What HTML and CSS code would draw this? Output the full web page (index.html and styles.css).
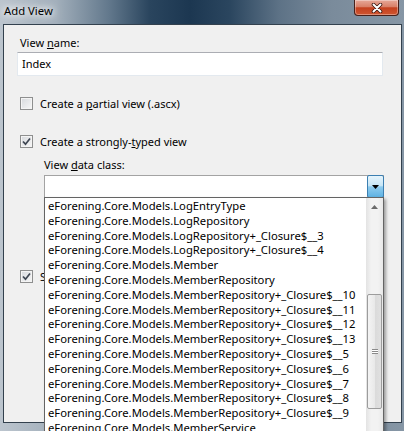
FILE: index.html
```html
<!DOCTYPE html>
<html>
    <head>
        <meta name="viewport" content="width=device-width, initial-scale=1" />
        <link rel="stylesheet" href="styles.css">
    </head>
    <body>
        <div class="window">
            <div class="titlebar">
                <span class="title">Add View</span>
                <div class="close">
                    <svg width="12" height="10" viewBox="0 0 12 10">
                        <path d="M2.5 1.5 L9.5 8.5 M9.5 1.5 L2.5 8.5" stroke="#3b1710" stroke-width="3.6" stroke-linecap="round" />
                        <path d="M2.5 1.5 L9.5 8.5 M9.5 1.5 L2.5 8.5" stroke="#fff" stroke-width="2" stroke-linecap="round" />
                    </svg>
                </div>
            </div>
            <div class="client">
                <div class="label first">View <u>n</u>ame:</div>
                <div class="textbox">Index</div>

                <div class="check row-partial">
                    <span class="box"></span>
                    <span>Create a <u>p</u>artial view (.ascx)</span>
                </div>
                <div class="check row-typed">
                    <span class="box"><svg width="11" height="11" viewBox="0 0 11 11"><path d="M2 5.5 L4.5 8.2 L9 2.5" fill="none" stroke="#3e4652" stroke-width="1.7" /></svg></span>
                    <span>Create a strongly-<u>t</u>yped view</span>
                </div>

                <div class="typed">
                    <div class="label">View <u>d</u>ata class:</div>
                    <div class="combo">
                        <div class="combo-text"></div>
                        <div class="combo-btn">
                            <svg width="7" height="4" viewBox="0 0 7 4"><path d="M0 0 H7 L3.5 4 Z" fill="#000" /></svg>
                        </div>
                        <div class="droplist">
                            <div class="items" id="items"></div>
                            <div class="scrollbar">
                                <div class="arrow">
                                    <svg width="7" height="4" viewBox="0 0 7 4"><path d="M0 4 H7 L3.5 0 Z" fill="#6b6b6b" /></svg>
                                </div>
                                <div class="thumb"><span class="grip"></span></div>
                            </div>
                        </div>
                    </div>
                </div>

                <div class="check row-master">
                    <span class="box"><svg width="11" height="11" viewBox="0 0 11 11"><path d="M2 5.5 L4.5 8.2 L9 2.5" fill="none" stroke="#3e4652" stroke-width="1.7" /></svg></span>
                    <span>Select master page</span>
                </div>
            </div>
        </div>
        <script>
            const names = [
                'LogEntryType',
                'LogRepository',
                'LogRepository+_Closure$__3',
                'LogRepository+_Closure$__4',
                'Member',
                'MemberRepository',
                'MemberRepository+_Closure$__10',
                'MemberRepository+_Closure$__11',
                'MemberRepository+_Closure$__12',
                'MemberRepository+_Closure$__13',
                'MemberRepository+_Closure$__5',
                'MemberRepository+_Closure$__6',
                'MemberRepository+_Closure$__7',
                'MemberRepository+_Closure$__8',
                'MemberRepository+_Closure$__9',
                'MemberService'
            ];
            document.getElementById('items').innerHTML = names
                .map((n) => `<div class="item">eForening.Core.Models.${n}</div>`)
                .join('');
        </script>
    </body>
</html>
```

FILE: styles.css
```css
body {
    margin: 0;
    font-family: "Noto Sans", sans-serif;
    font-size: 11px;
    color: #000;
}

.window {
    background: linear-gradient(90deg, #bcc5ce 0, #a2afbb 14%, #62788c 27%, #2a455e 37%, #1c3751 47%, #2b465f 57%, #5d7286 69%, #7a8b9b 82%, #8696a5 100%);
    display: flex;
    flex-direction: column;
    height: 431px;
    overflow: hidden;
    width: 404px;
}

/* Title bar */
.titlebar {
    align-items: flex-start;
    display: flex;
    flex: none;
    height: 24px;
    justify-content: space-between;
}
.title {
    font-size: 11.3px;
    line-height: 15px;
    padding: 3px 0 0 4px;
    text-shadow: 0 0 6px #fff, 0 0 10px #fff, 0 0 14px rgba(255, 255, 255, 0.8);
}
.close {
    align-items: center;
    background: linear-gradient(#e6a898 0, #d98068 45%, #c4411f 52%, #cf5530 100%);
    border: 1px solid #47201a;
    border-radius: 0 0 4px 4px;
    border-top: none;
    box-shadow: inset 0 0 0 1px rgba(255, 255, 255, 0.35);
    display: flex;
    height: 15px;
    justify-content: center;
    margin-right: 5px;
    width: 43px;
}

/* Client area */
.client {
    background-color: #f0f0f0;
    border: 1px solid #33414e;
    flex: none;
    height: 399px;
    margin: 0 2px 0 3px;
    padding: 10px 0 0 13px;
    box-sizing: border-box;
}
.label {
    line-height: 15px;
    margin: 8px 0 0 0;
}
.label.first {
    margin: 0 0 0 3px;
}
.textbox {
    background-color: #fff;
    border: 1px solid #e3e9ef;
    border-top-color: #abadb3;
    box-sizing: border-box;
    height: 24px;
    line-height: 22px;
    margin-top: 2px;
    padding-left: 4px;
    width: 366px;
}

/* Checkboxes */
.check {
    align-items: center;
    display: flex;
    gap: 7px;
    height: 15px;
    line-height: 15px;
    margin-left: 3px;
    white-space: nowrap;
}
.row-partial {
    margin-top: 20px;
}
.row-typed {
    margin-top: 23px;
}
.row-master {
    margin-top: 71px;
}
.box {
    align-items: center;
    background: linear-gradient(135deg, #d6d9dd, #f7f7f7);
    border: 1px solid #8e8f8f;
    box-shadow: inset 0 0 0 1px #f4f4f4;
    box-sizing: border-box;
    display: flex;
    flex: none;
    height: 13px;
    justify-content: center;
    width: 13px;
}

/* Combo box */
.typed {
    padding-left: 27px;
}
.combo {
    background-color: #fff;
    border: 1px solid #a3a3a3;
    box-sizing: border-box;
    display: flex;
    height: 23px;
    margin-top: 3px;
    position: relative;
    width: 340px;
}
.combo-text {
    flex: 1;
}
.combo-btn {
    align-items: center;
    background: linear-gradient(#e6f4fc 0, #c8e6f6 45%, #8ecbee 52%, #5fb2e3 100%);
    border: 1px solid #3c7fb1;
    border-radius: 2px;
    display: flex;
    justify-content: center;
    margin: -1px -1px -1px 0;
    width: 15px;
}

/* Dropped list */
.droplist {
    background-color: #fff;
    border: 1px solid #646464;
    box-shadow: 2px 2px 3px rgba(0, 0, 0, 0.35);
    display: flex;
    height: 260px;
    left: -1px;
    position: absolute;
    right: -1px;
    top: 21px;
}
.items {
    flex: 1;
    overflow: hidden;
    padding-top: 1px;
}
.item {
    font-size: 11.25px;
    line-height: 14.8px;
    padding-left: 3px;
    white-space: nowrap;
}
.scrollbar {
    background: linear-gradient(90deg, #e3e3e3, #f2f2f2 30%, #f2f2f2 70%, #e8e8e8);
    display: flex;
    flex: none;
    flex-direction: column;
    width: 17px;
}
.arrow {
    align-items: center;
    display: flex;
    height: 17px;
    justify-content: center;
}
.thumb {
    align-items: center;
    background: linear-gradient(90deg, #f4f4f4, #e9e9e9 50%, #dadada 51%, #e0e0e0);
    border: 1px solid #9c9c9c;
    border-radius: 2px;
    box-sizing: border-box;
    display: flex;
    height: 115px;
    justify-content: center;
    margin: 79px 1px 0 1px;
}
.grip {
    background: linear-gradient(#fff 0, #fff 33%, #8a8a8a 34%, #8a8a8a 66%, #fff 67%);
    border-bottom: 1px solid #8a8a8a;
    border-top: 1px solid #8a8a8a;
    height: 3px;
    width: 6px;
}
```
